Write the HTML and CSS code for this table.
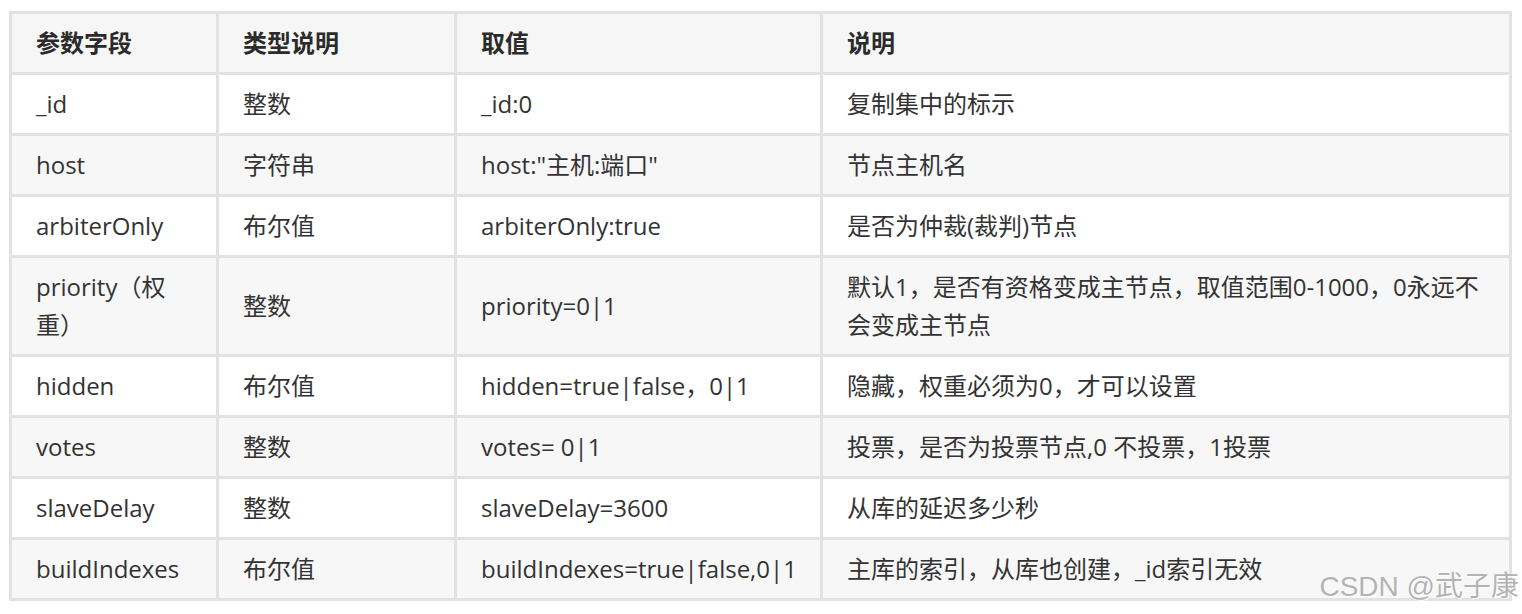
FILE: index.html
```html
<!DOCTYPE html>
<html lang="zh-CN">
<head>
<meta charset="utf-8">
<title>副本集成员参数</title>
<link rel="stylesheet" href="styles.css">
</head>
<body>
<div class="page">
  <table class="params">
    <colgroup>
      <col class="c1"><col class="c2"><col class="c3"><col class="c4">
    </colgroup>
    <thead>
      <tr><th>参数字段</th><th>类型说明</th><th>取值</th><th>说明</th></tr>
    </thead>
    <tbody>
      <tr><td>_id</td><td>整数</td><td>_id:0</td><td>复制集中的标示</td></tr>
      <tr><td>host</td><td>字符串</td><td>host:"主机:端口"</td><td>节点主机名</td></tr>
      <tr><td>arbiterOnly</td><td>布尔值</td><td>arbiterOnly:true</td><td>是否为仲裁(裁判)节点</td></tr>
      <tr><td>priority（权重）</td><td>整数</td><td>priority=0|1</td><td>默认1，是否有资格变成主节点，取值范围0-1000，0永远不会变成主节点</td></tr>
      <tr><td>hidden</td><td>布尔值</td><td>hidden=true|false，0|1</td><td>隐藏，权重必须为0，才可以设置</td></tr>
      <tr><td>votes</td><td>整数</td><td>votes= 0|1</td><td>投票，是否为投票节点,0 不投票，1投票</td></tr>
      <tr><td>slaveDelay</td><td>整数</td><td>slaveDelay=3600</td><td>从库的延迟多少秒</td></tr>
      <tr><td>buildIndexes</td><td>布尔值</td><td>buildIndexes=true|false,0|1</td><td>主库的索引，从库也创建，_id索引无效</td></tr>
    </tbody>
  </table>
  <div class="watermark">CSDN @武子康</div>
</div>
</body>
</html>
```

FILE: styles.css
```css
html, body {
  margin: 0;
  padding: 0;
  background: #ffffff;
}
.page {
  position: relative;
  width: 1522px;
  height: 614px;
  padding: 11px 0 0 9px;
  box-sizing: border-box;
}
.params {
  border-collapse: collapse;
  table-layout: fixed;
  width: 1503px;
  font-family: "Open Sans", "Noto Sans CJK SC", sans-serif;
  font-size: 24px;
  line-height: 38px;
  color: #333333;
  border: 3px solid #e2e2e2;
}
.c1 { width: 207px; }
.c2 { width: 238px; }
.c3 { width: 366px; }
.c4 { width: auto; }
.params th,
.params td {
  border: 3px solid #e2e2e2;
  padding: 10px 24px 10px 24px;
  text-align: left;
  vertical-align: middle;
}
.params th {
  font-weight: 700;
  background: #f6f6f6;
  color: #2b2b2b;
}
.params tbody tr:nth-child(odd) td {
  background: #ffffff;
}
.params tbody tr:nth-child(even) td {
  background: #f7f7f7;
}
.watermark {
  position: absolute;
  right: 3px;
  bottom: 12px;
  font-family: "Liberation Sans", "Noto Sans CJK SC", sans-serif;
  font-size: 28px;
  line-height: 30px;
  color: rgba(175, 175, 175, 0.95);
  text-shadow: 1px 1px 1px rgba(255, 255, 255, 0.9);
}
```
